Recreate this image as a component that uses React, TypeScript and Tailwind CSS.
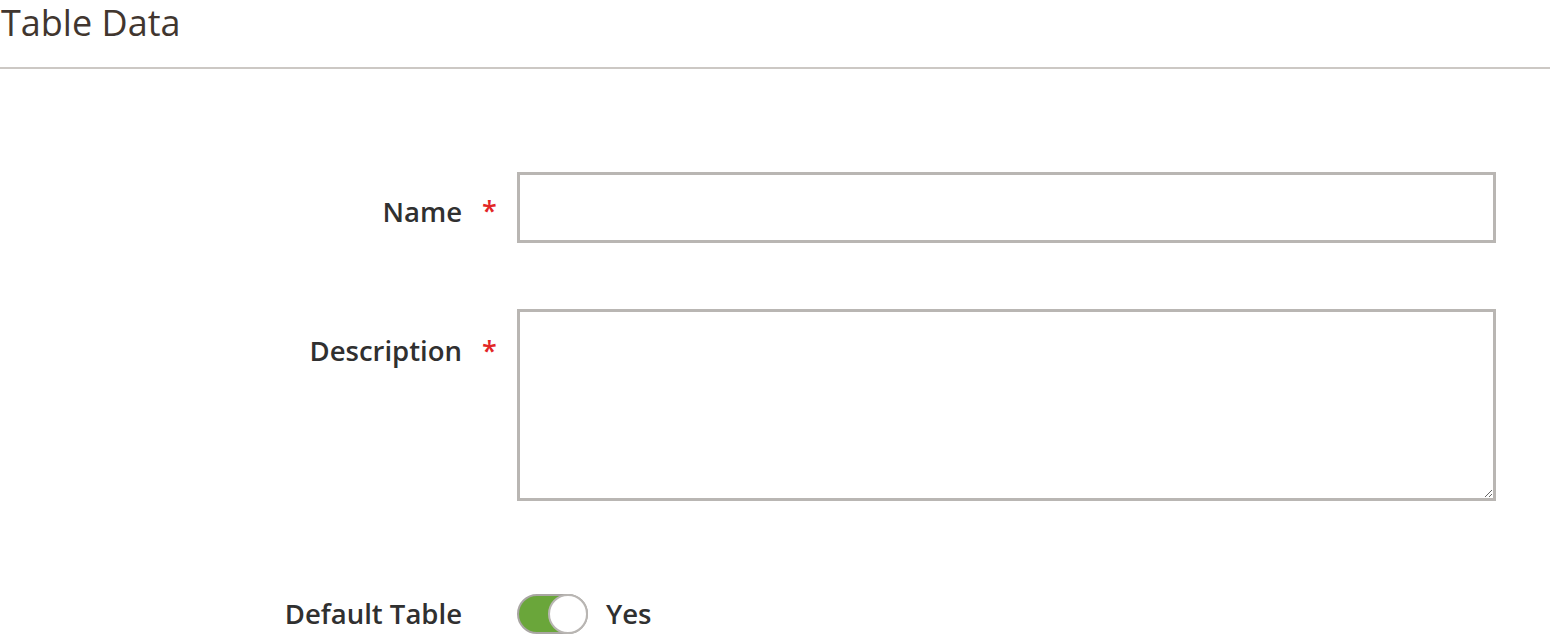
export default function App() {
  return (
    <div className="w-[1552px] h-[640px] overflow-hidden bg-white font-['Open_Sans',sans-serif]">
      <h1 className="pl-[1px] pt-[2px] text-[36px] leading-[42px] text-[#41362f] font-normal">
        Table Data
      </h1>
      <div className="mt-[23px] h-[2px] w-[1550px] bg-[#ccc8c4]" />

      <div className="mt-[103px] flex flex-col">
        {/* Name */}
        <div className="flex items-center h-[71px]">
          <div className="w-[462px] pt-[8px] text-right text-[27.5px] font-semibold text-[#303030]">Name</div>
          <div className="w-[55px] pl-[20px] pt-[8px] text-[27px] font-semibold text-[#e22626]">*</div>
          <input className="w-[979px] h-[71px] border-[3px] border-[#b9b6b3] bg-white outline-none" />
        </div>

        {/* Description */}
        <div className="flex mt-[66px]">
          <div className="w-[462px] pt-[22px] text-right text-[27.5px] font-semibold text-[#303030] leading-[40px]">
            Description
          </div>
          <div className="w-[55px] pl-[20px] pt-[22px] text-[27px] font-semibold text-[#e22626] leading-[40px]">*</div>
          <textarea className="w-[979px] h-[192px] border-[3px] border-[#b9b6b3] bg-white outline-none resize-y" />
        </div>

        {/* Default Table */}
        <div className="flex items-center mt-[93px] h-[40px]">
          <div className="w-[462px] text-right text-[27.5px] font-semibold text-[#303030]">Default Table</div>
          <div className="w-[55px]" />
          <div className="relative w-[71px] h-[40px] rounded-full bg-[#6aa63a] border-[2px] border-[#a9a6a3]">
            <div className="absolute right-[-2px] top-[-2px] w-[40px] h-[40px] rounded-full bg-white border-[2px] border-[#b9b6b3]" />
          </div>
          <span className="ml-[18px] text-[27.5px] font-semibold text-[#303030]">Yes</span>
        </div>
      </div>
    </div>
  )
}
